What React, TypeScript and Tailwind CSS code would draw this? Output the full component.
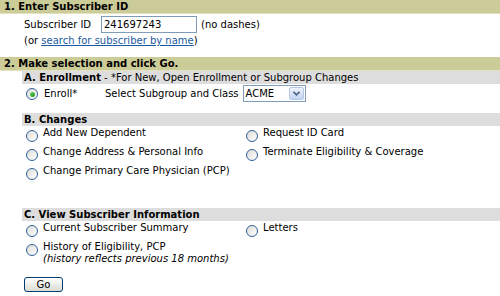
import React from "react";

function Radio() {
  return (
    <span className="mt-[3px] inline-block h-[12px] w-[12px] shrink-0 rounded-full border border-[#2f5f9c] bg-gradient-to-br from-[#dcdcd6] to-[#ffffff]" />
  );
}

function Header({ children }: { children: React.ReactNode }) {
  return (
    <div className="flex h-[14px] items-center border-b border-[#e3e3c4] bg-[#cccc99] pl-[4px] text-[10px] font-bold leading-none text-black">
      {children}
    </div>
  );
}

function SubHeader({ children }: { children: React.ReactNode }) {
  return (
    <div className="ml-[22px] flex h-[13px] items-center bg-[#dddddd] pl-[2px] text-[10px] leading-none">
      {children}
    </div>
  );
}

function Option({ label, sub }: { label: string; sub?: string }) {
  return (
    <div className="flex gap-[5px] whitespace-nowrap pl-[4px]">
      <Radio />
      <div className="leading-[12px]">
        <div>{label}</div>
        {sub && <div className="italic">{sub}</div>}
      </div>
    </div>
  );
}

export default function App() {
  return (
    <div className="h-[296px] w-[500px] overflow-hidden bg-white font-['DejaVu_Sans',sans-serif] text-[10px] text-black">
      <Header>1. Enter Subscriber ID</Header>
      <div className="pl-[24px] pt-[2px]">
        <div className="flex items-center">
          <span className="w-[77px]">Subscriber ID</span>
          <div className="flex h-[17px] w-[96px] items-center border border-[#7f9db9] bg-white pl-[2px]">
            241697243
          </div>
          <span className="ml-[4px]">(no dashes)</span>
        </div>
        <div className="mt-[2px] leading-[12px]">
          (or <span className="text-[#1a5aa0] underline">search for subscriber by name</span>)
        </div>
      </div>

      <div className="mt-[10px]">
        <Header>2. Make selection and click Go.</Header>
      </div>
      <SubHeader>
        <span className="font-bold">A. Enrollment</span>
        <span>&nbsp;- *For New, Open Enrollment or Subgroup Changes</span>
      </SubHeader>
      <div className="mt-[1px] flex items-center pl-[26px]">
        <span className="flex items-center gap-[6px]">
          <span className="relative mt-[1px] inline-block h-[12px] w-[12px] rounded-full border border-[#2f5f9c] bg-gradient-to-br from-[#dcdcd6] to-[#ffffff]">
            <span className="absolute left-[2.5px] top-[2.5px] h-[5px] w-[5px] rounded-full bg-gradient-to-br from-[#5fd85f] to-[#1f8f1f]" />
          </span>
          <span className="w-[61px]">Enroll*</span>
        </span>
        <span>Select Subgroup and Class</span>
        <div className="ml-[4px] flex h-[17px] w-[63px] items-center border border-[#7f9db9] bg-white">
          <span className="flex-1 pl-[2px]">ACME</span>
          <span className="mr-[1px] flex h-[13px] w-[15px] items-center justify-center rounded-[2px] border border-[#b4c7e4] bg-gradient-to-b from-[#eef3fc] to-[#c2d4f2]">
            <svg width="7" height="5" viewBox="0 0 7 5">
              <path d="M0.5 0.8 L3.5 3.8 L6.5 0.8" stroke="#4d6185" strokeWidth="1.6" fill="none" />
            </svg>
          </span>
        </div>
      </div>

      <div className="mt-[11px]">
        <SubHeader>
          <span className="font-bold">B. Changes</span>
        </SubHeader>
      </div>
      <div className="ml-[22px] grid grid-cols-[220px_1fr] gap-y-[4px] pt-[1px]">
        <Option label="Add New Dependent" />
        <Option label="Request ID Card" />
        <Option label="Change Address & Personal Info" />
        <Option label="Terminate Eligibility & Coverage" />
        <Option label="Change Primary Care Physician (PCP)" />
      </div>

      <div className="mt-[28px]">
        <SubHeader>
          <span className="font-bold">C. View Subscriber Information</span>
        </SubHeader>
      </div>
      <div className="ml-[22px] grid grid-cols-[220px_1fr] gap-y-[4px] pt-[1px]">
        <Option label="Current Subscriber Summary" />
        <Option label="Letters" />
        <Option label="History of Eligibility, PCP" sub="(history reflects previous 18 months)" />
      </div>

      <div className="pl-[24px] pt-[12px]">
        <button className="flex h-[15px] w-[39px] items-center justify-center rounded-[3px] border border-[#003c74] bg-gradient-to-b from-[#ffffff] to-[#dcdcd2] text-[10px] leading-none">
          Go
        </button>
      </div>
    </div>
  );
}
